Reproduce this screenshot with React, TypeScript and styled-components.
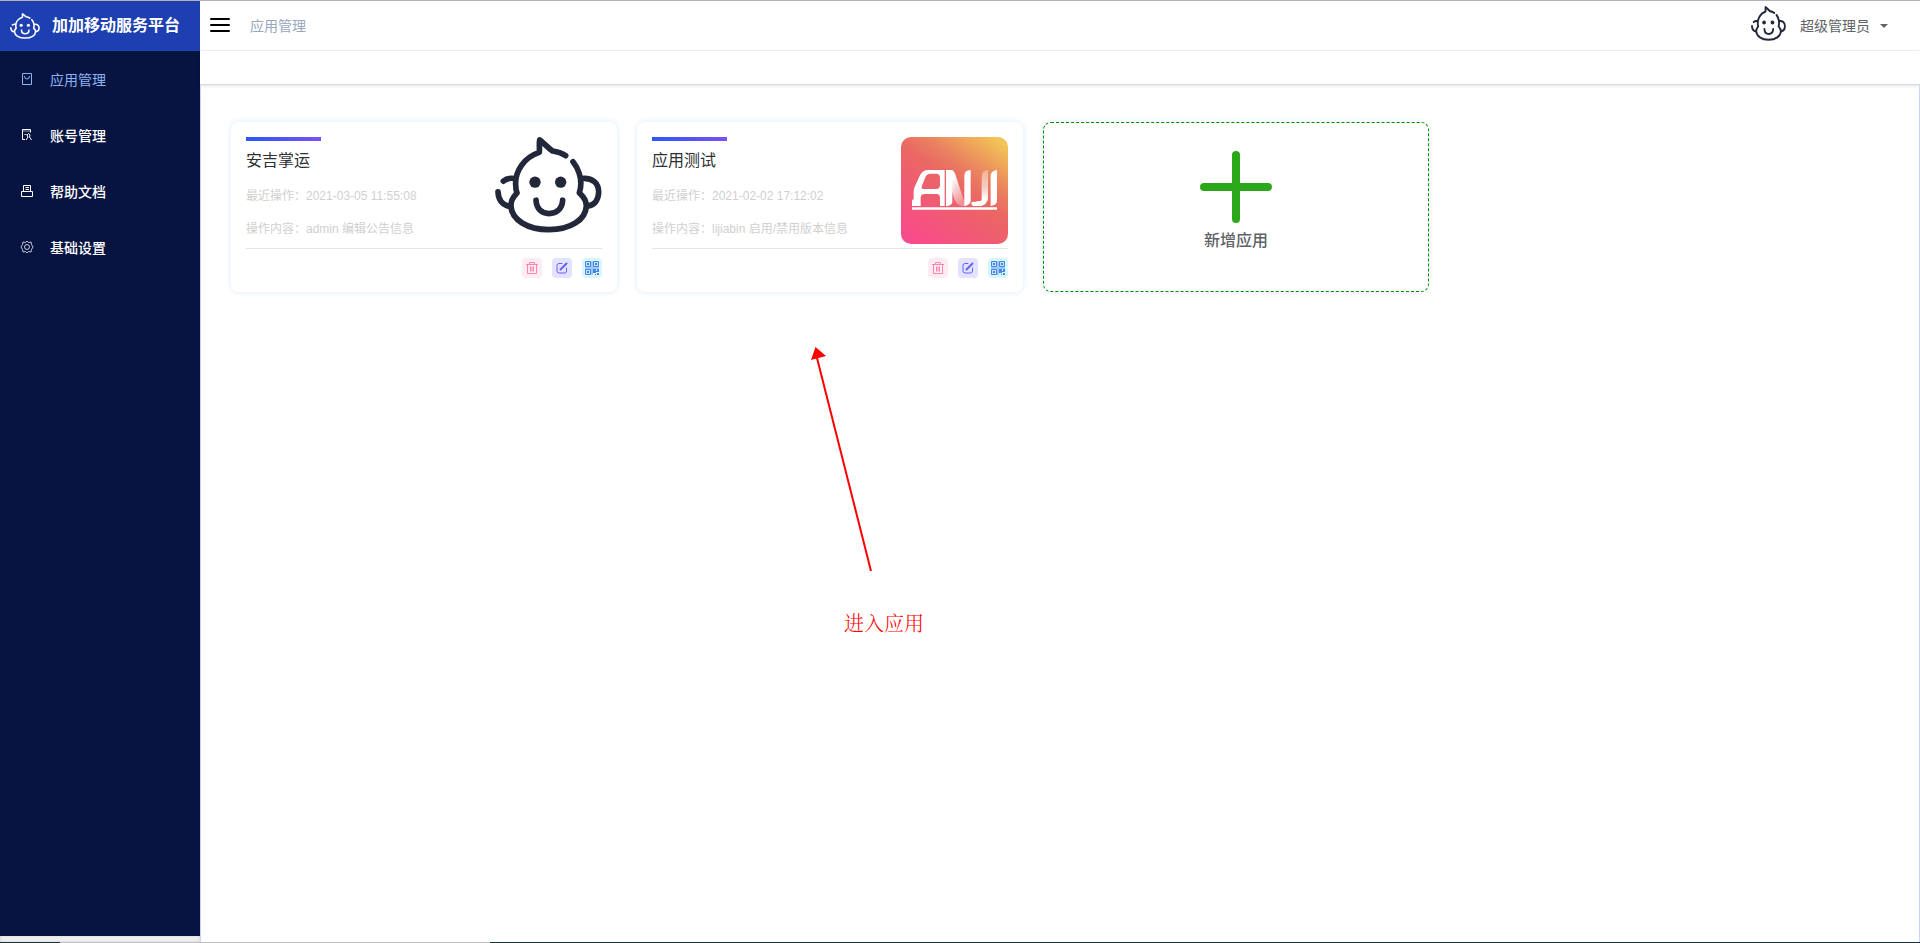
import React from "react";
import styled, { createGlobalStyle } from "styled-components";

const GlobalStyle = createGlobalStyle`
  *, *::before, *::after { box-sizing: border-box; }
  body {
    margin: 0;
    background: #fff;
    color: #303133;
    font-family: "Liberation Sans", "Noto Sans CJK SC", sans-serif;
    font-size: 14px;
  }
  button { font-family: inherit; border: 0; padding: 0; background: none; cursor: pointer; }
  a { color: inherit; text-decoration: none; }
  h1, h2, p { margin: 0; padding: 0; }
  svg { display: block; }
`;

const Page = styled.div`
  position: relative;
  display: flex;
  flex-direction: column;
  min-height: 100vh;
  border-top: 1px solid #b3b3b3;
`;

const Shell = styled.div`
  flex: 1;
  display: flex;
`;

const Sidebar = styled.aside`
  flex: 0 0 200px;
  display: flex;
  flex-direction: column;
  background: #071442;
`;

const Brand = styled.a`
  display: flex;
  align-items: center;
  gap: 12px;
  height: 50px;
  padding-left: 10px;
  background: #1e3fb1;
  color: #fff;
`;

const BrandName = styled.h1`
  font-size: 16px;
  line-height: 20px;
  font-weight: 700;
  white-space: nowrap;
`;

const Menu = styled.nav`
  flex: 1;
  display: flex;
  flex-direction: column;
`;

const MenuLink = styled.a<{ $active?: boolean }>`
  display: flex;
  align-items: center;
  gap: 16px;
  height: 56px;
  padding: 0 20px;
  font-weight: ${(p) => (p.$active ? 400 : 500)};
  && { color: ${(p) => (p.$active ? "#8db2f2" : "#fff")}; }
`;

const SidebarFoot = styled.div`
  height: 6px;
  background: #f7f7f7;
  box-shadow: inset 0 0 4px #cfcfcf;
`;

const Main = styled.div`
  flex: 1;
  min-width: 0;
  display: flex;
  flex-direction: column;
`;

const Navbar = styled.header`
  display: flex;
  align-items: center;
  height: 50px;
  padding: 0 32px 0 10px;
  border-bottom: 1px solid #f2f2f2;
`;

const MenuToggle = styled.button`
  width: 20px;
  height: 20px;
`;

const Crumb = styled.span`
  margin-left: 20px;
  color: #97a8be;
  line-height: 20px;
`;

const UserMenu = styled.button`
  display: flex;
  align-items: center;
  margin-left: auto;
  color: #606266;
  font-size: 14px;
  line-height: 20px;
`;

const Avatar = styled.span`
  padding-bottom: 4px;
  color: #22283a;
`;

const UserName = styled.span`
  margin: 0 10px 0 14px;
`;

const TagBar = styled.div`
  height: 34px;
  border-bottom: 1px solid #d8dce5;
  box-shadow: 0 1px 3px rgba(0, 0, 0, 0.12);
`;

const Content = styled.main`
  flex: 1;
  padding: 37px 84px 37px 30px;
  border: solid #cbd4f8;
  border-width: 0 1px;
`;

const CardGrid = styled.div`
  display: grid;
  grid-template-columns: repeat(4, minmax(0, 1fr));
  gap: 20px;
`;

const Card = styled.article`
  height: 170px;
  padding: 15px 15px 14px;
  border-radius: 8px;
  box-shadow: 0 0 6px #d9eafe;
`;

const CardBody = styled.div`
  display: flex;
  justify-content: space-between;
  height: 112px;
  border-bottom: 1px solid #e6e6e6;
`;

const CardText = styled.div`
  min-width: 0;
`;

const Accent = styled.div`
  width: 75px;
  height: 4px;
  background: linear-gradient(90deg, #2b57fa, #7a52f4);
`;

const CardTitle = styled.h2`
  margin: 8px 0 10px;
  font-size: 16px;
  line-height: 24px;
  font-weight: 400;
`;

const CardMeta = styled.p`
  margin-bottom: 7px;
  color: #d0d0d0;
  font-size: 12px;
  line-height: 26px;
  white-space: nowrap;
`;

const CardActions = styled.div`
  display: flex;
  justify-content: flex-end;
  gap: 10px;
  padding-top: 9px;
`;

const ActionButton = styled.button<{ $bg: string; $fg: string }>`
  display: grid;
  place-items: center;
  width: 20px;
  height: 20px;
  border-radius: 4px;
  background: ${(p) => p.$bg};
  color: ${(p) => p.$fg};
`;

const AddCard = styled.button`
  && { border: 1px dashed #008a00; }
  display: flex;
  flex-direction: column;
  align-items: center;
  height: 170px;
  padding-top: 28px;
  border-radius: 8px;
  box-shadow: 0 0 6px #e4f0fe;
  color: #606266;
  font-size: 16px;
  line-height: 24px;
  font-weight: 500;
`;

const AddLabel = styled.span`
  margin-top: 6px;
`;

const BottomEdge = styled.div`
  height: 1px;
  background: linear-gradient(90deg, #1d3038 60px, #c0c0c0 60px, #c0c0c0 490px, #1d3038 490px);
`;

const Note = styled.div`
  position: absolute;
  left: 810px;
  top: 345px;
  color: #f00;
  font-size: 20px;
  line-height: 30px;
  font-family: "Noto Serif CJK SC", "Noto Sans CJK SC", serif;
  font-weight: 300;
  pointer-events: none;
`;

const NoteText = styled.p`
  padding: 32px 0 0 34px;
`;

const FaceFrame = styled.div`
  width: 107px;
  height: 107px;
  color: #22283a;
`;

function Face({ width, height }: { width: number; height: number }) {
  return (
    <svg width={width} height={height} viewBox="45 36 321 287" preserveAspectRatio="none" fill="none"
      stroke="currentColor" strokeWidth="17" strokeLinecap="round" strokeLinejoin="round" aria-hidden="true">
      <path d="M257 92C245 84 233 80 218 78C203 68 190 52 179 45C177 56 179 68 178 82C132 97 105 138 107 178C107 188 108 196 111 203C96 220 93 227 93 243C95 283 142 313 207 313C272 313 317 283 319 243C319 227 314 219 298 203C304 184 304 164 298 146C294 132 288 121 279 110" />
      <path d="M70 168C79 160 91 158 104 160M54 200C55 226 70 241 91 244M306 160C338 157 356 175 356 200C356 226 342 241 321 243" />
      <path d="M168 225C169 250 185 265 207 265C230 265 247 250 248 225" />
      <circle cx="165" cy="171" r="17" fill="currentColor" stroke="none" />
      <circle cx="242" cy="171" r="17" fill="currentColor" stroke="none" />
    </svg>
  );
}

function AnjiLogo() {
  return (
    <svg width="107" height="107" viewBox="0 0 321 321" role="img" aria-label="ANJI">
      <defs>
        <linearGradient id="tile" x1="0.15" y1="1" x2="0.85" y2="0">
          <stop offset="0" stopColor="#f94a8b" />
          <stop offset="0.55" stopColor="#ea6763" />
          <stop offset="0.7" stopColor="#ea7f60" />
          <stop offset="1" stopColor="#f2c355" />
        </linearGradient>
        <linearGradient id="fadeDown" x1="0" y1="0" x2="0.5" y2="1">
          <stop offset="0.3" stopColor="#fff" />
          <stop offset="1" stopColor="#fff" stopOpacity="0.3" />
        </linearGradient>
        <linearGradient id="fadeUp" x1="0" y1="1" x2="0" y2="0">
          <stop offset="0.2" stopColor="#fff" />
          <stop offset="0.5" stopColor="#fff" stopOpacity="0.65" />
          <stop offset="1" stopColor="#fff" stopOpacity="0.35" />
        </linearGradient>
      </defs>
      <rect width="321" height="321" rx="30" fill="url(#tile)" />
      <path fill="#fff" fillRule="evenodd" d="M33 207V192Q33 188 38 187L38 164Q38 156 41 149L57 115Q65 99 82 99H131V207H117V182Q117 171 107 171H71Q59 171 59 182V207ZM73 121L63 146Q59 156 70 156H105Q117 156 117 143V122Q117 110 105 110H88Q77 110 73 121Z" />
      <path fill="#fff" d="M135 99H148L154 137V194Q154 206 135 207Z" />
      <path fill="url(#fadeDown)" d="M137 99H152Q160 100 165 118L185 180Q190 198 199 207H183Q166 204 159 183L139 119Z" />
      <path fill="#fff" d="M190 207V117Q190 99 209 99V192Q209 203 190 207Z" />
      <path fill="url(#fadeUp)" d="M242 191V120Q242 101 261 99V184Q258 205 235 207H220Q209 205 212 197Z" />
      <path fill="#fff" d="M212 195Q238 195 261 183Q258 205 236 207H220Q211 204 212 195Z" />
      <path fill="#fff" d="M269 207V118Q269 101 288 99V192Q288 204 269 207ZM33 211H288V218H33Z" />
    </svg>
  );
}

const menuArt: Record<string, React.ReactNode> = {
  apps: <path d="M2.5 1.5h9v11h-9zM4.5 4q0 3 2.5 3t2.500-3" />,
  account: (
    <>
      <path d="M5 11.5H2.5v-10h8v3" />
      <path d="M3 3h8M4 6.500h3" strokeOpacity="0.6" />
      <path d="M6 12l2-3-1-2 1.500-1.500L10 7l-.5 2 2 3" />
    </>
  ),
  docs: <path d="M3.5 7.500V1.500h7v6M1.500 7.500h11v5h-11zM5.500 3.500H9M5.500 5.500H9" />,
  settings: (
    <>
      <path strokeOpacity="0.75" d="M5.500 2.500L7 1l1.500 1.500 2.500-.5.500 2.500L13 7l-1.500 2.500L11 12l-2.500-.5L7 13l-1.500-1.500L3 12l-.5-2.500L1 7l1.500-2.500L3 2z" />
      <circle cx="7" cy="7" r="2.500" strokeOpacity="0.75" />
    </>
  ),
};

function MenuIcon({ name }: { name: string }) {
  return (
    <svg width="14" height="14" viewBox="0 0 14 14" fill="none" stroke="currentColor" strokeLinejoin="round" aria-hidden="true">
      {menuArt[name]}
    </svg>
  );
}

function Bin() {
  return (
    <svg width="12" height="14" viewBox="0 0 12 14" fill="none" stroke="currentColor" aria-hidden="true">
      <path d="M0 3.500h12M3.500 3V1.500h5V3M1.500 4v8.500h9V4M4.500 5.500v5M6 5.500v5M7.500 5.500v5" />
    </svg>
  );
}

function Pencil() {
  return (
    <svg width="12" height="12" viewBox="0 0 12 12" fill="none" stroke="currentColor" strokeLinecap="round" aria-hidden="true">
      <path d="M6 1.500H3Q1 1.500 1 3.500v5.500Q1 11 3 11h5.500q2 0 2-2V6" />
      <path d="M4.500 7.500L10.500 1.500" strokeWidth="2" />
    </svg>
  );
}

function QrCode() {
  return (
    <svg width="14" height="14" viewBox="0 0 14 14" fill="none" stroke="currentColor" aria-hidden="true">
      <path fill="#c9e2fb" d="M.5.500h5v5h-5zM8.500.500h5v5h-5zM.5 8.500h5v5h-5z" />
      <path fill="currentColor" stroke="none" d="M2 2h2v2H2zM10 2h2v2h-2zM2 10h2v2H2zM8 8h3v2h1V8h2v3h-3v1H8zM10 13h1v1h-1zM12 12h2v2h-2z" />
      <path strokeOpacity="0.4" strokeWidth="2" d="M0 7h14M7 0v14" />
    </svg>
  );
}

const menu = [
  { icon: "apps", label: "应用管理" },
  { icon: "account", label: "账号管理" },
  { icon: "docs", label: "帮助文档" },
  { icon: "settings", label: "基础设置" },
];

const apps = [
  { name: "安吉掌运", time: "2021-03-05 11:55:08", action: "admin 编辑公告信息", art: <FaceFrame><Face width={107} height={96} /></FaceFrame> },
  { name: "应用测试", time: "2021-02-02 17:12:02", action: "lijiabin 启用/禁用版本信息", art: <AnjiLogo /> },
];

export default function App() {
  return (
    <>
      <GlobalStyle />
      <Page>
        <Shell>
          <Sidebar>
            <Brand href="#">
              <Face width={30} height={26} />
              <BrandName>加加移动服务平台</BrandName>
            </Brand>
            <Menu>
              {menu.map((item, i) => (
                <MenuLink key={item.label} href="#" $active={i === 0}>
                  <MenuIcon name={item.icon} />
                  {item.label}
                </MenuLink>
              ))}
            </Menu>
            <SidebarFoot />
          </Sidebar>
          <Main>
            <Navbar>
              <MenuToggle aria-label="折叠菜单">
                <svg width="20" height="20" viewBox="0 0 20 20" stroke="#000" strokeWidth="2" strokeLinecap="round" aria-hidden="true">
                  <path d="M1 3h18M1 9h18M1 15h18" />
                </svg>
              </MenuToggle>
              <Crumb>应用管理</Crumb>
              <UserMenu>
                <Avatar><Face width={35} height={35} /></Avatar>
                <UserName>超级管理员</UserName>
                <svg width="8" height="4" viewBox="0 0 8 4" fill="currentColor" aria-hidden="true">
                  <path d="M0 0h8L4 4z" />
                </svg>
              </UserMenu>
            </Navbar>
            <TagBar />
            <Content>
              <CardGrid>
                {apps.map((app) => (
                  <Card key={app.name}>
                    <CardBody>
                      <CardText>
                        <Accent />
                        <CardTitle>{app.name}</CardTitle>
                        <CardMeta>最近操作：{app.time}</CardMeta>
                        <CardMeta>操作内容：{app.action}</CardMeta>
                      </CardText>
                      {app.art}
                    </CardBody>
                    <CardActions>
                      <ActionButton $bg="#ffebf2" $fg="#fb86a9" aria-label="删除"><Bin /></ActionButton>
                      <ActionButton $bg="#e3e2ff" $fg="#6a60f8" aria-label="编辑"><Pencil /></ActionButton>
                      <ActionButton $bg="#d8f7fb" $fg="#4485e8" aria-label="二维码"><QrCode /></ActionButton>
                    </CardActions>
                  </Card>
                ))}
                <AddCard>
                  <svg width="72" height="72" viewBox="0 0 72 72" stroke="#2ba71a" strokeWidth="8" strokeLinecap="round" aria-hidden="true">
                    <path d="M36 4v64M4 36h64" />
                  </svg>
                  <AddLabel>新增应用</AddLabel>
                </AddCard>
              </CardGrid>
            </Content>
          </Main>
        </Shell>
        <BottomEdge />
        <Note>
          <svg width="70" height="230" viewBox="0 0 70 230" aria-hidden="true">
            <path d="M7 12L61 225" stroke="#f00" strokeWidth="2" />
            <path d="M5.500 1L16 10 1 14z" fill="#f00" />
          </svg>
          <NoteText>进入应用</NoteText>
        </Note>
      </Page>
    </>
  );
}
